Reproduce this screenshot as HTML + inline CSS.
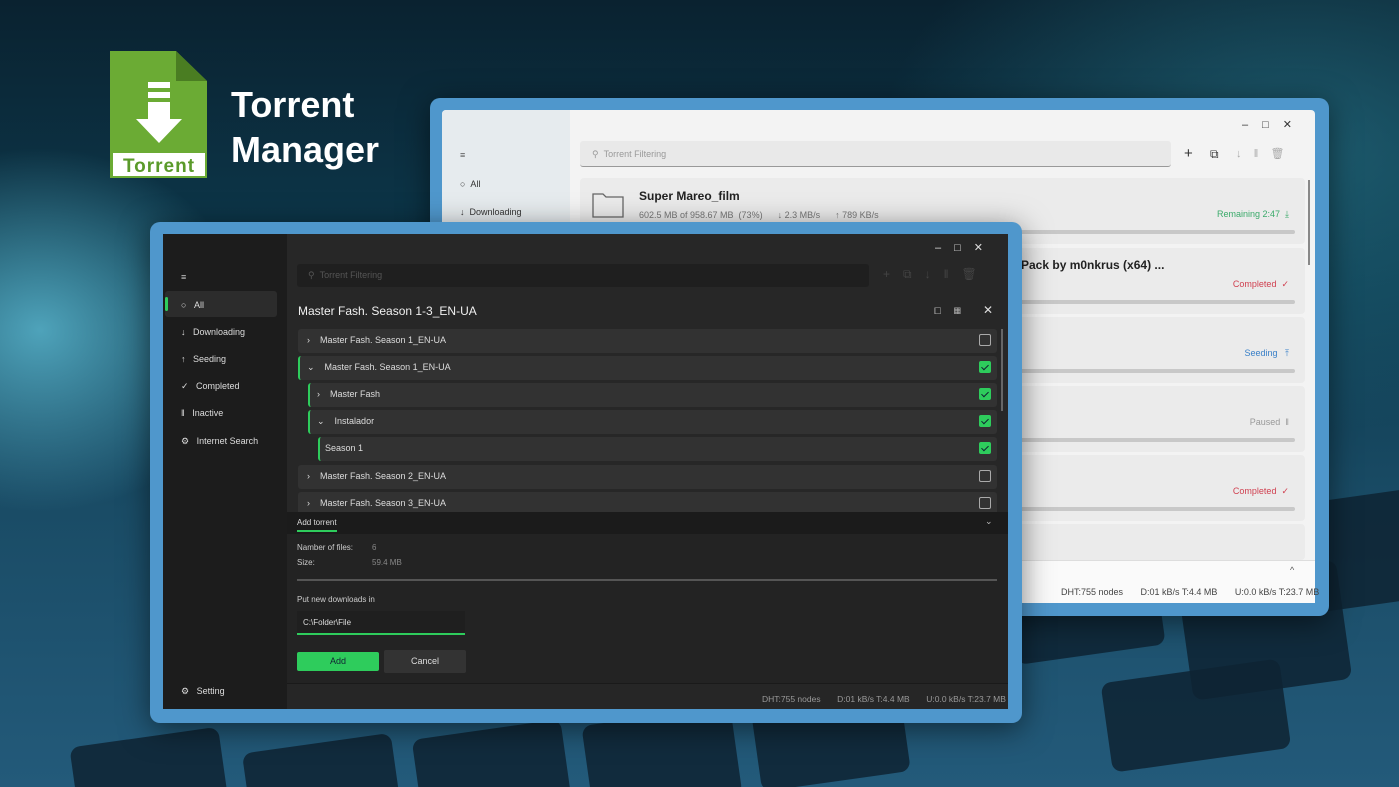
<!DOCTYPE html>
<html><head><meta charset="utf-8"><style>
*{margin:0;padding:0;box-sizing:border-box}
html,body{width:1399px;height:787px;overflow:hidden}
body{position:relative;font-family:"Liberation Sans",sans-serif;
background:radial-gradient(ellipse 300px 260px at 40px 330px,rgba(120,230,255,.6),transparent 70%),
radial-gradient(ellipse 600px 400px at 1300px 150px,rgba(40,120,140,.6),transparent 70%),
linear-gradient(180deg,#0a2230 0%,#0d3a4e 35%,#1a4c66 65%,#235a7a 100%);}
.clip{position:absolute;left:0;top:0;width:1399px;height:787px;overflow:hidden}
.a{position:absolute}
.kb{position:absolute;left:-100px;top:620px;width:1700px;height:400px;transform:rotate(-8deg);transform-origin:0 0}
.key{position:absolute;background:#0e2332;border-radius:10px;opacity:.85}
.frame{position:absolute;background:#4f97cc;border-radius:10px;box-shadow:0 6px 30px rgba(0,0,0,.5)}
.t{position:absolute;white-space:nowrap}
.card{position:absolute;left:580px;width:725px;height:66px;background:#ebebeb;border-radius:4px}
.bar{position:absolute;left:440px;right:10px;top:52px;height:4px;background:#c8c8c8;border-radius:2px}
.row{position:absolute;height:24px;background:#323232;border-radius:3px;right:0}
.row span{position:absolute;top:6px;font-size:9px;color:#ddd}
.cb{position:absolute;right:6px;top:5px;width:12px;height:12px;border:1px solid #aaa;border-radius:2px}
.cb.on{background:#2ecc5c;border-color:#2ecc5c}
.cb.on:after{content:"";position:absolute;left:3px;top:1px;width:3px;height:6px;border:solid #123;border-width:0 1.5px 1.5px 0;transform:rotate(45deg)}
.nav{position:absolute;left:20px;font-size:9px;color:#ddd}
</style></head><body>
<div class="clip">
<div class="kb">
<div class="key" style="left:150px;top:150px;width:150px;height:90px"></div>
<div class="key" style="left:320px;top:180px;width:150px;height:90px"></div>
<div class="key" style="left:490px;top:190px;width:150px;height:90px"></div>
<div class="key" style="left:660px;top:200px;width:150px;height:90px"></div>
<div class="key" style="left:830px;top:200px;width:150px;height:90px"></div>
<div class="key" style="left:1100px;top:110px;width:150px;height:90px"></div>
<div class="key" style="left:1270px;top:140px;width:160px;height:120px"></div>
<div class="key" style="left:1180px;top:230px;width:180px;height:90px"></div>
<div class="key" style="left:1400px;top:80px;width:160px;height:110px"></div>
<div class="key" style="left:1220px;top:20px;width:140px;height:80px"></div>
</div>
</div>

<!-- logo -->
<svg class="a" style="left:110px;top:51px" width="98" height="127" viewBox="0 0 98 127">
<path d="M0 0H66L97 30V127H0Z" fill="#6bab34"/>
<path d="M66 0L97 30H66Z" fill="#4a7d22"/>
<rect x="38" y="31" width="22" height="6" fill="#fff"/><rect x="38" y="41" width="22" height="6" fill="#fff"/>
<path d="M38 51H60V68H72L49 92L26 68H38Z" fill="#fff"/>
<rect x="3" y="102" width="92" height="23" fill="#fff"/>
<text x="49" y="121" font-family="Liberation Sans" font-weight="bold" font-size="19" fill="#5a9a2a" text-anchor="middle" letter-spacing="1">Torrent</text>
</svg>
<div class="t" style="left:231px;top:82px;font-size:36px;font-weight:bold;color:#fff;line-height:45px">Torrent<br>Manager</div>

<!-- back window -->
<div class="frame" style="left:430px;top:98px;width:899px;height:518px"></div>
<div class="a" style="left:442px;top:110px;width:873px;height:493px;background:#f3f3f3;border-radius:4px;overflow:hidden">
 <div class="a" style="left:0;top:0;width:128px;height:493px;background:#e6ebee"></div>
 <div class="t" style="left:18px;top:40px;font-size:9px;color:#555">≡</div>
 <div class="t" style="left:18px;top:69px;font-size:9px;color:#333">○&nbsp;&nbsp;All</div>
 <div class="t" style="left:18px;top:97px;font-size:9px;color:#333">↓&nbsp;&nbsp;Downloading</div>
 <div class="t" style="left:800px;top:8px;font-size:11px;color:#333;letter-spacing:14px">–□✕</div>
 <div class="a" style="left:138px;top:31px;width:591px;height:26px;background:#e9e9e9;border-bottom:1px solid #999;border-radius:3px"></div>
 <div class="t" style="left:150px;top:39px;font-size:9px;color:#999">⚲&nbsp;&nbsp;Torrent Filtering</div>
 <div class="t" style="left:742px;top:35px;font-size:15px;color:#333">+</div>
 <div class="t" style="left:768px;top:37px;font-size:12px;color:#333">⧉</div>
 <div class="t" style="left:794px;top:37px;font-size:11px;color:#aaa">↓&nbsp;&nbsp;&nbsp;&nbsp;‖&nbsp;&nbsp;&nbsp;&nbsp;🗑</div>
 <div class="a" style="left:866px;top:70px;width:2px;height:85px;background:#888"></div>
</div>
<div class="card" style="top:178px"><svg class="a" style="left:12px;top:12px" width="32" height="28"><path d="M1 4h10l3 3h17v20H1z" fill="none" stroke="#666" stroke-width="1.3"/></svg>
<div class="t" style="left:59px;top:11px;font-size:12px;font-weight:bold;color:#222">Super Mareo_film</div>
<div class="t" style="left:59px;top:32px;font-size:9px;color:#777">602.5 MB of 958.67 MB&nbsp; (73%)&nbsp;&nbsp;&nbsp;&nbsp;&nbsp; ↓ 2.3 MB/s&nbsp;&nbsp;&nbsp;&nbsp;&nbsp; ↑ 789 KB/s</div>
<div class="t" style="right:16px;top:31px;font-size:9px;color:#3aaa6a">Remaining 2:47&nbsp; ⤓</div><div class="bar"></div></div>
<div class="card" style="top:248px"><div class="t" style="left:441px;top:10px;font-size:12px;font-weight:bold;color:#222">Pack by m0nkrus (x64) ...</div>
<div class="t" style="right:16px;top:31px;font-size:9px;color:#d04050">Completed&nbsp; ✓</div><div class="bar"></div></div>
<div class="card" style="top:317px"><div class="t" style="right:16px;top:31px;font-size:9px;color:#3a80c8">Seeding&nbsp;&nbsp; ⤒</div><div class="bar"></div></div>
<div class="card" style="top:386px"><div class="t" style="right:16px;top:31px;font-size:9px;color:#999">Paused&nbsp; ‖</div><div class="bar"></div></div>
<div class="card" style="top:455px"><div class="t" style="right:16px;top:31px;font-size:9px;color:#d04050">Completed&nbsp; ✓</div><div class="bar"></div></div>
<div class="card" style="top:524px;height:36px"></div>
<div class="a" style="left:1020px;top:560px;width:295px;height:43px;background:#fafafa;border-top:1px solid #ddd"></div>
<div class="t" style="left:1290px;top:565px;font-size:9px;color:#555">^</div>
<div class="t" style="left:1061px;top:587px;font-size:9px;color:#444">DHT:755 nodes&nbsp;&nbsp;&nbsp;&nbsp;&nbsp;&nbsp; D:01 kB/s T:4.4 MB&nbsp;&nbsp;&nbsp;&nbsp;&nbsp;&nbsp; U:0.0 kB/s T:23.7 MB</div>

<!-- front window -->
<div class="frame" style="left:150px;top:222px;width:872px;height:501px"></div>
<div class="a" style="left:163px;top:234px;width:845px;height:475px;background:#272727;overflow:hidden">
 <div class="a" style="left:0;top:0;width:124px;height:475px;background:#1c1c1c"></div>
 <div class="a" style="left:2px;top:57px;width:112px;height:26px;background:#2c2c2c;border-radius:3px"></div>
 <div class="a" style="left:2px;top:63px;width:3px;height:14px;background:#2ecc5c;border-radius:2px"></div>
 <div class="t" style="left:18px;top:38px;font-size:9px;color:#ccc">≡</div>
 <div class="nav" style="left:18px;top:66px">○&nbsp;&nbsp;&nbsp;All</div>
 <div class="nav" style="left:18px;top:93px">↓&nbsp;&nbsp;&nbsp;Downloading</div>
 <div class="nav" style="left:18px;top:120px">↑&nbsp;&nbsp;&nbsp;Seeding</div>
 <div class="nav" style="left:18px;top:147px">✓&nbsp;&nbsp;&nbsp;Completed</div>
 <div class="nav" style="left:18px;top:174px">‖&nbsp;&nbsp;&nbsp;Inactive</div>
 <div class="nav" style="left:18px;top:202px">⚙&nbsp;&nbsp;&nbsp;Internet Search</div>
 <div class="nav" style="left:18px;top:452px">⚙&nbsp;&nbsp;&nbsp;Setting</div>
 <div class="t" style="left:772px;top:7px;font-size:11px;color:#ddd;letter-spacing:13px">–□✕</div>
 <div class="a" style="left:134px;top:30px;width:572px;height:23px;background:#1f1f1f;border-radius:3px"></div>
 <div class="t" style="left:145px;top:36px;font-size:9px;color:#555">⚲&nbsp;&nbsp;Torrent Filtering</div>
 <div class="t" style="left:720px;top:33px;font-size:12px;color:#444;letter-spacing:13px">+⧉↓‖🗑</div>
 <div class="t" style="left:135px;top:70px;font-size:12px;color:#f0f0f0">Master Fash. Season 1-3_EN-UA</div>
 <div class="t" style="left:771px;top:72px;font-size:9px;color:#aaa">⧠&nbsp;&nbsp;&nbsp;&nbsp;&nbsp;▦</div>
 <div class="t" style="left:820px;top:69px;font-size:12px;color:#ddd">✕</div>
 <div class="a" style="left:135px;top:95px;width:699px;height:183px">
  <div class="row" style="left:0;top:0"><span style="left:9px">›&nbsp;&nbsp;&nbsp;&nbsp;Master Fash. Season 1_EN-UA</span><div class="cb"></div></div>
  <div class="row" style="left:0;top:27px;border-left:2px solid #2ecc5c"><span style="left:7px">⌄&nbsp;&nbsp;&nbsp;&nbsp;Master Fash. Season 1_EN-UA</span><div class="cb on"></div></div>
  <div class="row" style="left:10px;top:54px;border-left:2px solid #2ecc5c"><span style="left:7px">›&nbsp;&nbsp;&nbsp;&nbsp;Master Fash</span><div class="cb on"></div></div>
  <div class="row" style="left:10px;top:81px;border-left:2px solid #2ecc5c"><span style="left:7px">⌄&nbsp;&nbsp;&nbsp;&nbsp;Instalador</span><div class="cb on"></div></div>
  <div class="row" style="left:20px;top:108px;border-left:2px solid #2ecc5c"><span style="left:5px">Season 1</span><div class="cb on"></div></div>
  <div class="row" style="left:0;top:136px"><span style="left:9px">›&nbsp;&nbsp;&nbsp;&nbsp;Master Fash. Season 2_EN-UA</span><div class="cb"></div></div>
  <div class="row" style="left:0;top:163px"><span style="left:9px">›&nbsp;&nbsp;&nbsp;&nbsp;Master Fash. Season 3_EN-UA</span><div class="cb"></div></div>
 </div>
 <div class="a" style="left:838px;top:95px;width:2px;height:82px;background:#666"></div>
 <div class="a" style="left:124px;top:278px;width:721px;height:22px;background:#1b1b1b"></div>
 <div class="t" style="left:134px;top:284px;font-size:8px;color:#ddd">Add torrent</div>
 <div class="a" style="left:134px;top:296px;width:40px;height:2px;background:#2ecc5c"></div>
 <div class="t" style="left:822px;top:282px;font-size:9px;color:#bbb">⌄</div>
 <div class="a" style="left:124px;top:300px;width:721px;height:149px;background:#232323"></div>
 <div class="t" style="left:134px;top:309px;font-size:8px;color:#ccc">Namber of files:</div><div class="t" style="left:209px;top:309px;font-size:8px;color:#888">6</div>
 <div class="t" style="left:134px;top:324px;font-size:8px;color:#ccc">Size:</div><div class="t" style="left:209px;top:324px;font-size:8px;color:#888">59.4 MB</div>
 <div class="a" style="left:134px;top:345px;width:700px;height:2px;background:#555"></div>
 <div class="t" style="left:134px;top:361px;font-size:8px;color:#ccc">Put new downloads in</div>
 <div class="a" style="left:134px;top:377px;width:168px;height:24px;background:#1f1f1f;border-bottom:2px solid #2ecc5c"></div>
 <div class="t" style="left:140px;top:384px;font-size:8px;color:#ddd">C:\Folder\File</div>
 <div class="a" style="left:134px;top:418px;width:82px;height:19px;background:#2ecc5c;border-radius:2px;font-size:9px;color:#123;text-align:center;line-height:19px">Add</div>
 <div class="a" style="left:221px;top:416px;width:82px;height:23px;background:#333;border-radius:2px;font-size:9px;color:#ddd;text-align:center;line-height:23px">Cancel</div>
 <div class="a" style="left:124px;top:449px;width:721px;height:26px;background:#262626;border-top:1px solid #1a1a1a"></div>
 <div class="t" style="left:599px;top:460px;font-size:8.5px;color:#999">DHT:755 nodes&nbsp;&nbsp;&nbsp;&nbsp;&nbsp;&nbsp; D:01 kB/s T:4.4 MB&nbsp;&nbsp;&nbsp;&nbsp;&nbsp;&nbsp; U:0.0 kB/s T:23.7 MB</div>
</div>
</body></html>
